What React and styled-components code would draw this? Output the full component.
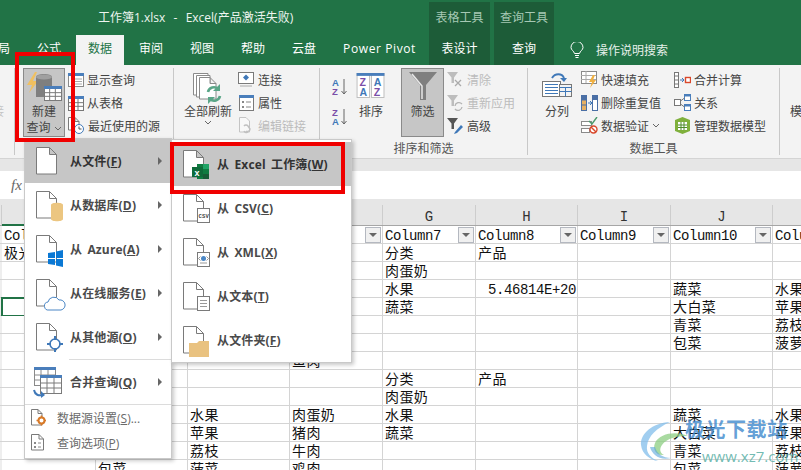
import React from 'react';
import styled, { createGlobalStyle } from 'styled-components';

const GlobalStyle = createGlobalStyle`
  html, body { margin: 0; padding: 0; background: #fff; }
`;

const UI_FONT = `"Open Sans", "Noto Sans CJK SC", sans-serif`;
const SHEET_FONT = `"Liberation Mono", "Noto Sans CJK SC", monospace`;

const Page = styled.div`
  position: relative;
  width: 801px;
  height: 470px;
  overflow: hidden;
  font-family: ${UI_FONT};
  font-size: 12px;
  color: #444;
`;

/* title bar + tabs */
const Header = styled.header`
  display: flex;
  height: 65px;
  background: #217346;
  color: #fff;
`;

const HeaderMain = styled.div`
  width: 429px;
  overflow: hidden;
`;

const Title = styled.div`
  height: 35px;
  line-height: 36px;
  padding-left: 98px;
  white-space: pre;
  word-spacing: 1px;
  color: #eef5f0;
`;

const TabRow = styled.nav`
  display: flex;
  height: 30px;
  margin-left: -15.5px;
`;

const Tab = styled.div`
  margin: 0 1.5px;
  padding: 0 12px;
  line-height: 28px;
  white-space: nowrap;
  letter-spacing: ${p => (p.$latin ? '0.6px' : '0')};
  background: ${p => (p.$active ? '#f3f3f3' : 'transparent')};
  color: ${p => (p.$active ? '#217346' : '#fff')};
`;

const ContextGroup = styled.div`
  width: ${p => p.$w}px;
  margin: 2px 4px 0 0;
  background: #1d5c38;
  text-align: center;
`;

const ContextLabel = styled.div`
  height: 33px;
  line-height: 31px;
  color: #a6c8b4;
`;

const ContextTab = styled.div`
  height: 30px;
  line-height: 28px;
  color: #fff;
`;

const SearchHint = styled.div`
  display: flex;
  align-items: center;
  gap: 12px;
  height: 30px;
  margin: 35px 0 0 12px;
  color: #e6f0ea;
`;

/* ribbon */
const Ribbon = styled.section`
  display: flex;
  height: 94px;
  box-sizing: border-box;
  padding-top: 3px;
  background: #f3f3f3;
  border-bottom: 1px solid #d4d4d4;
`;

const Group = styled.div`
  width: ${p => p.$w}px;
  height: 87px;
  box-sizing: border-box;
  flex: none;
  border-right: 1px solid #c8c8c8;
  color: #444;
`;

const StubGroup = styled(Group)`
  overflow: hidden;
  padding-top: 36px;
  line-height: 16px;
  color: #c4c4c4;
  text-indent: -8px;
`;

const EndGroup = styled.div`
  padding: 36px 0 0 10px;
  line-height: 16px;
`;

const GroupBody = styled.div`
  display: flex;
  height: 69px;
  padding-left: ${p => p.$pad}px;
`;

const GroupLabel = styled.div`
  margin-top: 3px;
  line-height: 18px;
  text-align: center;
  color: #555;
`;

const LargeButton = styled.div`
  flex: none;
  width: ${p => p.$w}px;
  height: 69px;
  box-sizing: border-box;
  margin-left: ${p => p.$gap || 0}px;
  display: flex;
  flex-direction: column;
  align-items: center;
  background: ${p => (p.$pressed ? '#c6c6c6' : 'transparent')};
  border: 1px solid ${p => (p.$pressed ? '#8a8a8a' : 'transparent')};
`;

const LargeIcon = styled.div`
  height: 35px;
  box-sizing: border-box;
  padding-bottom: ${p => p.$lift || 0}px;
  display: flex;
  align-items: flex-end;
  justify-content: center;
`;

const LargeLine = styled.div`
  display: flex;
  align-items: center;
  gap: 3px;
  line-height: 16px;
  white-space: nowrap;
`;

const SmallColumn = styled.div`
  flex: none;
  width: ${p => p.$w || 'auto'};
  margin-left: ${p => p.$gap || 0}px;
`;

const SmallButton = styled.div`
  display: flex;
  align-items: center;
  gap: 3px;
  height: 23px;
  white-space: nowrap;
  color: ${p => (p.$off ? '#bcbcbc' : '#444')};
`;

const SortColumn = styled.div`
  display: flex;
  flex: none;
  flex-direction: column;
  gap: 12px;
  width: 16px;
  padding-top: 10px;
`;

/* formula bar */
const GapBar = styled.div`
  height: ${p => p.$h}px;
  background: #e6e6e6;
`;

const FormulaBar = styled.div`
  height: 28px;
  padding-left: 11px;
  background: #fff;
  font: italic 15px/29px "Liberation Serif", serif;
  color: #666;
`;

/* worksheet */
const COLUMNS = '2px 94px 92px 102px 93px 93px 102px 93px 102px 120px';

const ColumnBar = styled.div`
  display: grid;
  grid-template-columns: ${COLUMNS};
  height: 21px;
  box-sizing: border-box;
  background: #e6e6e6;
  border-bottom: 1px solid #a6a6a6;
`;

const ColumnLetter = styled.div`
  padding-top: 2px;
  text-align: center;
  font: 14px/20px ${SHEET_FONT};
  color: #333;
  border-right: 1px solid #cdcdcd;
  box-sizing: border-box;
  height: ${p => (p.$current ? '21px' : '20px')};
  border-bottom: ${p => (p.$current ? '2px solid #217346' : '0')};
`;

const SheetRow = styled.div`
  display: grid;
  grid-template-columns: ${COLUMNS};
  height: 18px;
`;

const Cell = styled.div`
  display: flex;
  align-items: flex-start;
  justify-content: ${p => (p.$right ? 'flex-end' : 'space-between')};
  box-sizing: border-box;
  min-width: 0;
  overflow: hidden;
  padding: 0 1px 0 2px;
  border-right: 1px solid #d4d4d4;
  border-bottom: 1px solid #d4d4d4;
  font: 14px/20px ${SHEET_FONT};
  letter-spacing: 0.4px;
  color: #111;
  white-space: nowrap;
  background: ${p => (p.$stub ? '#eee' : '#fff')};
  outline: ${p => (p.$selected ? '2px solid #217346' : 'none')};
  outline-offset: -1px;
`;

const LatinText = styled.span`
  letter-spacing: -0.4px;
`;

const FilterButton = styled.span`
  flex: none;
  display: flex;
  align-items: center;
  justify-content: center;
  width: 16px;
  height: 16px;
  margin-top: 1px;
  box-sizing: border-box;
  background: #f0f0f0;
  border: 1px solid #b4b8c0;

  &::after {
    content: '';
    border-left: 4px solid transparent;
    border-right: 4px solid transparent;
    border-top: 4px solid #666;
  }
`;

/* drop-down menus */
const Menu = styled.div`
  position: absolute;
  box-sizing: border-box;
  left: ${p => p.$left}px;
  top: ${p => p.$top}px;
  width: ${p => p.$w}px;
  height: ${p => p.$h}px;
  padding-top: ${p => p.$padTop || 0}px;
  background: #fff;
  border: 1px solid #c9c9c9;
  box-shadow: 2px 2px 4px rgba(0, 0, 0, 0.22);
`;

const MenuItem = styled.div`
  position: relative;
  display: flex;
  align-items: center;
  height: 44px;
  padding-left: 11px;
  font-weight: 700;
  letter-spacing: 0.15px;
  word-spacing: 2px;
  color: ${p => (p.$active ? '#333' : '#4a4a4a')};
  background: ${p => (p.$active ? '#c6c6c6' : 'transparent')};
`;

const MenuIcon = styled.span`
  flex: none;
  display: flex;
  width: 34px;
`;

const SubArrow = styled.span`
  position: absolute;
  right: 9px;
  top: 50%;
  margin-top: -4px;
  border-top: 4px solid transparent;
  border-bottom: 4px solid transparent;
  border-left: 4px solid #666;
`;

const MenuRule = styled.div`
  height: 1px;
  margin-left: ${p => p.$indent}px;
  background: #dcdcdc;
`;

const PlainItem = styled.div`
  display: flex;
  align-items: center;
  height: 25px;
  padding-left: 6px;
  color: #6a6a6a;
`;

const PlainIcon = styled.span`
  flex: none;
  display: flex;
  width: 26px;
`;

const RedFrame = styled.div`
  position: absolute;
  left: ${p => p.$left}px;
  top: ${p => p.$top}px;
  width: ${p => p.$w}px;
  height: ${p => p.$h}px;
  box-sizing: border-box;
  border: 4px solid #f00000;
`;

const Watermark = styled.div`
  position: absolute;
  left: 640px;
  top: 418px;
  width: 161px;
  height: 48px;
`;

const WatermarkLogo = styled.svg`
  position: absolute;
  left: 0;
  top: 3px;
`;

const WatermarkName = styled.div`
  position: absolute;
  left: 45px;
  top: -1px;
  font: 700 20px/24px "Noto Sans CJK SC", sans-serif;
  letter-spacing: 0.5px;
  color: rgba(60, 135, 205, 0.8);
  white-space: nowrap;
`;

const WatermarkUrl = styled.div`
  position: absolute;
  left: 62px;
  top: 29px;
  font: 15px/18px "Open Sans", sans-serif;
  color: rgba(90, 175, 165, 0.85);
`;

/* icons */
const Chevron = () => (
  <svg width="8" height="5" viewBox="0 0 8 5">
    <path d="M1 1l3 3 3-3" fill="none" stroke="#666" />
  </svg>
);

const GridTable = ({ x, y, w, h, head = '#4a7ebb', line = '#8a8a8a' }) => {
  const cw = w / 3;
  const rh = (h - 3) / 3;
  return (
    <g>
      <rect x={x + 0.5} y={y + 0.5} width={w} height={h} fill="#fff" stroke={line} />
      <rect x={x} y={y} width={w + 1} height="3" fill={head} />
      <path
        d={`M${x + cw} ${y + 3}V${y + h} M${x + 2 * cw} ${y + 3}V${y + h} M${x} ${y + 3 + rh}H${x + w} M${x} ${y + 3 + 2 * rh}H${x + w}`}
        stroke={line}
        fill="none"
      />
    </g>
  );
};

const NewQueryIcon = () => (
  <svg width="36" height="32" viewBox="0 0 36 32">
    <path d="M9 0L1 13h5L3 21 12 9H7l4-9z" fill="#f0c060" />
    <path d="M10 5c0-4 16-4 16 0v20H10z" fill="#7f7f7f" />
    <ellipse cx="18" cy="5" rx="8" ry="2.5" fill="#a0a0a0" />
    <GridTable x={18} y={14} w={17} h={14} line="#7a7a7a" />
  </svg>
);

const ShowQueryIcon = () => (
  <svg width="16" height="16" viewBox="0 0 16 16">
    <rect x="0.5" y="1.5" width="15" height="13" fill="#fff" stroke="#8a8a8a" />
    <rect x="0" y="1" width="16" height="3" fill="#4a7ebb" />
    <path d="M5 4v11M7 7h7M7 9.5h7M7 12h7" stroke="#a8a8a8" fill="none" />
  </svg>
);

const FromTableIcon = () => (
  <svg width="16" height="16" viewBox="0 0 16 16">
    <GridTable x={0} y={1} w={15} h={14} line="#777" />
  </svg>
);

const RecentIcon = () => (
  <svg width="17" height="18" viewBox="0 0 17 18">
    <path d="M0.5 0.5H7L11 4.5V13H0.5Z M7 0.5V4.5H11" fill="#fff" stroke="#7a7a7a" />
    <circle cx="11" cy="12" r="4.5" fill="#fff" stroke="#3f78b8" />
    <path d="M11 9.5V12H13.5" fill="none" stroke="#555" />
  </svg>
);

const ConnectIcon = () => (
  <svg width="17" height="16" viewBox="0 0 17 16">
    <rect x="0.5" y="0.5" width="15" height="11" fill="#fff" stroke="#7a7a7a" />
    <path d="M8 2.5l3 3-3 3-3-3z" fill="#3f78b8" />
    <path d="M2 14h12" stroke="#aaa" />
  </svg>
);

const PropsIcon = () => (
  <svg width="17" height="16" viewBox="0 0 17 16">
    <rect x="1.5" y="0.5" width="14" height="15" fill="#fff" stroke="#7a7a7a" />
    <rect x="1" y="0" width="15" height="3" fill="#4a7ebb" />
    <path d="M4 6h2v2H4zM4 11h2v2H4z" fill="#888" />
    <path d="M8 7h5M8 12h5" stroke="#888" fill="none" />
  </svg>
);

const LinkIcon = () => (
  <svg width="17" height="17" viewBox="0 0 17 17">
    <path d="M1.5 0.5H8L11.5 4V15H1.5Z" fill="#f8f8f8" stroke="#c4c4c4" />
    <path d="M6 9a2.5 2.5 0 0 1 4 0l2 3a2.5 2.5 0 0 1-4 2M10 15a2.5 2.5 0 0 1-4-1" fill="none" stroke="#c0c0c0" strokeWidth="1.4" />
  </svg>
);

const RefreshAllIcon = () => (
  <svg width="32" height="31" viewBox="0 0 32 31">
    <path d="M1.5 0.5H16V22H1.5Z" fill="#fff" stroke="#8a8a8a" />
    <path d="M4.5 2.5H18V24H4.5Z" fill="#fff" stroke="#8a8a8a" />
    <path d="M7.5 4.5H18L24 10.5V26H7.5Z M18 4.5V10.5H24" fill="#fff" stroke="#8a8a8a" />
    <path d="M16 19a6 6 0 0 1 10-3" fill="none" stroke="#5aa688" strokeWidth="2.6" />
    <path d="M28 11v7h-7z" fill="#5aa688" />
    <path d="M28 23a6 6 0 0 1-10 3" fill="none" stroke="#5aa688" strokeWidth="2.6" />
    <path d="M16 31v-7h7z" fill="#5aa688" />
  </svg>
);

const SortIcon = ({ top, bottom, topFill, bottomFill }) => (
  <svg width="16" height="18" viewBox="0 0 16 18">
    <text x="0" y="8" fontSize="9.5" fontWeight="700" fontFamily="Liberation Sans" fill={topFill}>{top}</text>
    <text x="0" y="17" fontSize="9.5" fontWeight="700" fontFamily="Liberation Sans" fill={bottomFill}>{bottom}</text>
    <path d="M12 1v15M9.5 13l2.5 3 2.5-3" fill="none" stroke="#666" />
  </svg>
);

const SortBigIcon = () => (
  <svg width="30" height="25" viewBox="0 0 30 26" fontFamily="Liberation Sans" fontWeight="700" fontSize="11">
    <rect x="0.5" y="0.5" width="13" height="25" fill="#fff" stroke="#bdbdbd" />
    <rect x="15.5" y="0.5" width="13" height="25" fill="#fff" stroke="#bdbdbd" />
    <rect x="0" y="0" width="29" height="3" fill="#4a7ebb" />
    <text x="3" y="13" fill="#7a4ea8">Z</text>
    <text x="3" y="24" fill="#3f78b8">A</text>
    <text x="18" y="13" fill="#3f78b8">A</text>
    <text x="18" y="24" fill="#7a4ea8">Z</text>
  </svg>
);

const FunnelIcon = () => (
  <svg width="28" height="28" viewBox="0 0 28 28">
    <path d="M0 0H28L17 13V28H11V13Z" fill="#7f7f7f" />
    <path d="M3 2L13 14V27" fill="none" stroke="#e8e8e8" strokeWidth="1.5" />
  </svg>
);

const SmallFunnel = ({ fill, children }) => (
  <svg width="17" height="17" viewBox="0 0 17 17">
    <path d="M0 1H11L7 6.5V12H4.5V6.5Z" fill={fill} />
    {children}
  </svg>
);

const SplitIcon = () => (
  <svg width="32" height="26" viewBox="0 0 32 26">
    <rect x="1.5" y="9.5" width="18" height="15" fill="#fff" stroke="#777" />
    <path d="M4 12.5h13M4 15.5h13M4 18.5h13M4 21.5h13" stroke="#3f78b8" fill="none" />
    <path d="M11 6C14 1 21 1 23 6" fill="none" stroke="#3f78b8" strokeWidth="2" />
    <path d="M19 6h7l-3 4z" fill="#3f78b8" />
    <rect x="18.5" y="12.5" width="12" height="12" fill="#f3f3f3" stroke="#777" />
    <path d="M18.5 15.5h12M18.5 19.5h12M24.5 15.5v9" stroke="#3f78b8" fill="none" />
  </svg>
);

const FlashFillIcon = () => (
  <svg width="17" height="17" viewBox="0 0 17 17">
    <rect x="0.5" y="0.5" width="15" height="12" fill="#fff" stroke="#8a8a8a" />
    <path d="M0 4.5h15M0 8.5h15M5 0v12" stroke="#aaa" fill="none" />
    <path d="M12 4L8 11h3l-2 6 6-8h-3l2-5z" fill="#f0b040" />
  </svg>
);

const DedupeIcon = () => (
  <svg width="17" height="16" viewBox="0 0 17 16">
    <rect x="0.5" y="0.5" width="5" height="15" fill="#e8b060" stroke="#4a6fa5" />
    <path d="M1 5h4M1 10h4" stroke="#4a6fa5" />
    <rect x="0" y="0" width="6" height="5" fill="#4a6fa5" />
    <rect x="11.5" y="0.5" width="5" height="15" fill="#fff" stroke="#4a6fa5" />
    <rect x="11" y="0" width="6" height="5" fill="#4a6fa5" />
    <path d="M7 8h3M9 6l2 2-2 2" fill="none" stroke="#3f78b8" />
  </svg>
);

const ValidateIcon = () => (
  <svg width="17" height="17" viewBox="0 0 17 17">
    <rect x="0.5" y="4.5" width="10" height="4" fill="#fff" stroke="#8a8a8a" />
    <rect x="0.5" y="11.5" width="8" height="4" fill="#fff" stroke="#8a8a8a" />
    <path d="M8 4l3 3 5-7" fill="none" stroke="#4a9a6a" strokeWidth="1.4" />
    <circle cx="12.5" cy="12.5" r="3.5" fill="#fff" stroke="#d9482b" strokeWidth="1.4" />
    <path d="M10 10l5 5" stroke="#d9482b" strokeWidth="1.4" />
  </svg>
);

const ConsolidateIcon = () => (
  <svg width="17" height="16" viewBox="0 0 17 16">
    <rect x="0.5" y="0.5" width="4" height="15" fill="#fff" stroke="#777" />
    <path d="M0 4h4M0 8h4M0 12h4" stroke="#777" />
    <path d="M6 8h4M8 6l2 2-2 2" fill="none" stroke="#3f78b8" />
    <rect x="11.5" y="5.5" width="5" height="5" fill="#fff" stroke="#d9482b" strokeWidth="1.4" />
  </svg>
);

const RelationIcon = () => (
  <svg width="17" height="17" viewBox="0 0 17 17">
    <rect x="0.5" y="5.5" width="6" height="6" fill="#fff" stroke="#777" />
    <rect x="10.5" y="0.5" width="6" height="6" fill="#fff" stroke="#4a7ebb" />
    <rect x="10.5" y="10.5" width="6" height="6" fill="#fff" stroke="#4a7ebb" />
    <rect x="10" y="0" width="7" height="2.5" fill="#4a7ebb" />
    <rect x="10" y="10" width="7" height="2.5" fill="#4a7ebb" />
    <path d="M6.5 7L10.5 4M6.5 10L10.5 13" stroke="#777" fill="none" />
  </svg>
);

const ModelIcon = () => (
  <svg width="17" height="17" viewBox="0 0 17 17">
    <path d="M8.5 0L16 3V14L8.5 17 1 14V3Z" fill="#7fb03c" />
    <path d="M4 5h9v8H4z" fill="#fff" />
    <path d="M4 8h9M4 10.5h9M7 5v8M10 5v8" stroke="#4d8a2a" fill="none" />
  </svg>
);

const BulbIcon = () => (
  <svg width="14" height="17" viewBox="0 0 14 17">
    <path d="M4.5 11.5C4 9 1 8 1 5.5a6 6 0 0 1 12 0C13 8 10 9 9.5 11.5Z" fill="none" stroke="#fff" />
    <path d="M5 13.5h4M5.5 15.5h3" stroke="#fff" />
  </svg>
);

const Doc = () => (
  <path d="M0.5 5.5H13.5L20.5 12.5V32H0.5Z M13.5 5.5V12.5H20.5" fill="#fff" stroke="#7a7a7a" />
);

const MenuGlyph = ({ children }) => (
  <svg width="30" height="38" viewBox="0 0 30 38" overflow="visible">
    <Doc />
    {children}
  </svg>
);

const ExcelBadge = () => (
  <g>
    <rect x="14" y="19" width="12" height="15" fill="#107c41" />
    <rect x="20" y="19" width="6" height="5" fill="#21a366" />
    <rect x="20" y="29" width="6" height="5" fill="#185c37" />
    <rect x="9" y="22" width="11" height="10" fill="#0f6b3a" />
    <text x="11.5" y="30.5" fontSize="9" fontWeight="700" fontFamily="Liberation Sans" fill="#fff">x</text>
  </g>
);

const MergeIcon = () => (
  <svg width="30" height="32" viewBox="0 0 30 32" overflow="visible">
    <g transform="translate(-3 0)">
      <GridTable x={1} y={1} w={21} h={18} line="#8a8a8a" />
      <GridTable x={7} y={9} w={21} h={18} line="#7a7a7a" />
      <path d="M1 24c1 5 5 6 8 5" fill="none" stroke="#3f78b8" strokeWidth="2" />
      <path d="M8 25l4 4-4 3z" fill="#3f78b8" />
    </g>
  </svg>
);

const SourceSettingsIcon = () => (
  <svg width="15" height="17" viewBox="0 0 15 17">
    <path d="M0.5 0.5H7L11 4.5V16H0.5Z M7 0.5V4.5H11" fill="#fff" stroke="#7a7a7a" />
    <circle cx="10.5" cy="11.5" r="3" fill="#fff" stroke="#d87a28" strokeWidth="2" />
    <path d="M10.5 6.5v2M10.5 14.5v2M5.5 11.5h2M13.5 11.5h2" stroke="#d87a28" strokeWidth="1.6" />
  </svg>
);

const QueryOptionsIcon = () => (
  <svg width="13" height="17" viewBox="0 0 13 17">
    <path d="M0.5 0.5H8L12.5 5V16H0.5Z M8 0.5V5H12.5" fill="#fff" stroke="#7a7a7a" />
    <path d="M3 8h2v2H3zM3 12h2v2H3z" fill="#8a8a8a" />
    <path d="M7 9h3M7 13h3" stroke="#8a8a8a" />
  </svg>
);

const SwirlLogo = () => (
  <WatermarkLogo width="50" height="42" viewBox="0 0 50 42">
    <path d="M30 1C12 2 0 13 1 24c1 9 9 15 17 16-7-3-12-8-11-15C8 15 17 7 30 1z" fill="rgba(130,190,235,0.75)" />
    <path d="M48 15C36 10 20 12 15 22c-3 7 2 13 9 12-4-2-5-6-2-10 5-7 15-9 26-9z" fill="rgba(140,205,130,0.75)" />
    <path d="M10 26c2 8 10 14 21 11-8 0-14-4-16-11z" fill="rgba(90,165,220,0.6)" />
  </WatermarkLogo>
);

/* sheet data, keyed by column index */
const ROWS = [
  {},
  { 1: '极光', 5: '分类', 6: '产品' },
  { 5: '肉蛋奶' },
  { 5: '水果', 6: { right: '5.46814E+20' }, 8: '蔬菜', 9: '水果' },
  { 5: '蔬菜', 8: '大白菜', 9: '苹果' },
  { 8: '青菜', 9: '荔枝' },
  { 8: '包菜', 9: '菠萝' },
  { 4: '鱼肉' },
  { 5: '分类', 6: '产品' },
  { 5: '肉蛋奶' },
  { 3: '水果', 4: '肉蛋奶', 5: '水果', 8: '蔬菜', 9: '水果' },
  { 3: '苹果', 4: '猪肉', 5: '蔬菜', 8: '大白菜', 9: '苹果' },
  { 3: '荔枝', 4: '牛肉', 8: '青菜', 9: '荔枝' },
  { 2: '包菜', 3: '菠菜', 4: '鸡肉', 8: '包菜', 9: '菠萝' }
];

const LETTERS = ['', 'C', 'D', 'E', 'F', 'G', 'H', 'I', 'J', 'K'];
const INDEXES = LETTERS.map((_, i) => i);

const renderCell = (row, rowIndex, i) => {
  if (i === 0) return <Cell key={i} $stub />;
  if (rowIndex === 0) {
    return (
      <Cell key={i}>
        <LatinText>Column{i + 2}</LatinText>
        {i < 9 && <FilterButton />}
      </Cell>
    );
  }
  const value = row[i];
  if (value && value.right) {
    return (
      <Cell key={i} $right>
        <LatinText>{value.right}</LatinText>
      </Cell>
    );
  }
  return (
    <Cell key={i} $selected={rowIndex === 4 && i === 1}>
      {value}
    </Cell>
  );
};

const App = () => (
  <Page>
    <GlobalStyle />
    <Header>
      <HeaderMain>
        <Title>工作簿1.xlsx  -  Excel(产品激活失败)</Title>
        <TabRow>
          <Tab>局</Tab>
          <Tab>公式</Tab>
          <Tab $active>数据</Tab>
          <Tab>审阅</Tab>
          <Tab>视图</Tab>
          <Tab>帮助</Tab>
          <Tab>云盘</Tab>
          <Tab $latin>Power Pivot</Tab>
        </TabRow>
      </HeaderMain>
      <ContextGroup $w={61}>
        <ContextLabel>表格工具</ContextLabel>
        <ContextTab>表设计</ContextTab>
      </ContextGroup>
      <ContextGroup $w={60}>
        <ContextLabel>查询工具</ContextLabel>
        <ContextTab>查询</ContextTab>
      </ContextGroup>
      <SearchHint>
        <BulbIcon />
        操作说明搜索
      </SearchHint>
    </Header>

    <Ribbon>
      <StubGroup $w={15}>接</StubGroup>

      <Group $w={159}>
        <GroupBody $pad={8}>
          <LargeButton $w={42} $pressed>
            <LargeIcon><NewQueryIcon /></LargeIcon>
            <LargeLine>新建</LargeLine>
            <LargeLine>查询<Chevron /></LargeLine>
          </LargeButton>
          <SmallColumn $gap={3}>
            <SmallButton><ShowQueryIcon />显示查询</SmallButton>
            <SmallButton><FromTableIcon />从表格</SmallButton>
            <SmallButton><RecentIcon />最近使用的源</SmallButton>
          </SmallColumn>
        </GroupBody>
      </Group>

      <Group $w={146}>
        <GroupBody $pad={10}>
          <LargeButton $w={48}>
            <LargeIcon><RefreshAllIcon /></LargeIcon>
            <LargeLine>全部刷新</LargeLine>
            <LargeLine><Chevron /></LargeLine>
          </LargeButton>
          <SmallColumn $gap={6}>
            <SmallButton><ConnectIcon />连接</SmallButton>
            <SmallButton><PropsIcon />属性</SmallButton>
            <SmallButton $off><LinkIcon />编辑链接</SmallButton>
          </SmallColumn>
        </GroupBody>
      </Group>

      <Group $w={208}>
        <GroupBody $pad={12}>
          <SortColumn>
            <SortIcon top="A" bottom="Z" topFill="#3f78b8" bottomFill="#7a4ea8" />
            <SortIcon top="Z" bottom="A" topFill="#7a4ea8" bottomFill="#3f78b8" />
          </SortColumn>
          <LargeButton $w={36} $gap={5}>
            <LargeIcon $lift={6}><SortBigIcon /></LargeIcon>
            <LargeLine>排序</LargeLine>
          </LargeButton>
          <LargeButton $w={43} $gap={12} $pressed>
            <LargeIcon $lift={4}><FunnelIcon /></LargeIcon>
            <LargeLine>筛选</LargeLine>
          </LargeButton>
          <SmallColumn $gap={3}>
            <SmallButton $off>
              <SmallFunnel fill="#bdbdbd">
                <path d="M8 9l6 6M14 9l-6 6" stroke="#aaa" strokeWidth="1.3" />
              </SmallFunnel>
              清除
            </SmallButton>
            <SmallButton $off>
              <SmallFunnel fill="#bdbdbd">
                <path d="M8 12a4 4 0 0 1 7-2M15 13a4 4 0 0 1-7 2" fill="none" stroke="#b4b4b4" strokeWidth="1.3" />
              </SmallFunnel>
              重新应用
            </SmallButton>
            <SmallButton>
              <SmallFunnel fill="#555">
                <path d="M8 15l6-7 2 2-6 6-3 1z" fill="#3f78b8" />
              </SmallFunnel>
              高级
            </SmallButton>
          </SmallColumn>
        </GroupBody>
        <GroupLabel>排序和筛选</GroupLabel>
      </Group>

      <Group $w={252}>
        <GroupBody $pad={13}>
          <LargeButton $w={32}>
            <LargeIcon $lift={6}><SplitIcon /></LargeIcon>
            <LargeLine>分列</LargeLine>
          </LargeButton>
          <SmallColumn $gap={8} $w="93px">
            <SmallButton><FlashFillIcon />快速填充</SmallButton>
            <SmallButton><DedupeIcon />删除重复值</SmallButton>
            <SmallButton><ValidateIcon />数据验证<Chevron /></SmallButton>
          </SmallColumn>
          <SmallColumn>
            <SmallButton><ConsolidateIcon />合并计算</SmallButton>
            <SmallButton><RelationIcon />关系</SmallButton>
            <SmallButton><ModelIcon />管理数据模型</SmallButton>
          </SmallColumn>
        </GroupBody>
        <GroupLabel>数据工具</GroupLabel>
      </Group>

      <EndGroup>模</EndGroup>
    </Ribbon>

    <GapBar $h={12} />
    <FormulaBar>fx</FormulaBar>
    <GapBar $h={6} />

    <ColumnBar>
      {LETTERS.map((letter, i) => (
        <ColumnLetter key={i} $current={i === 1}>{letter}</ColumnLetter>
      ))}
    </ColumnBar>
    {ROWS.map((row, rowIndex) => (
      <SheetRow key={rowIndex}>
        {INDEXES.map(i => renderCell(row, rowIndex, i))}
      </SheetRow>
    ))}

    <Menu $left={24} $top={138} $w={148} $h={321}>
      <MenuItem $active>
        <MenuIcon><MenuGlyph /></MenuIcon>
        <span>从文件(<u>F</u>)</span>
        <SubArrow />
      </MenuItem>
      <MenuItem>
        <MenuIcon>
          <MenuGlyph>
            <path d="M15 19c0-3 12-3 12 0v14c0 3-12 3-12 0z" fill="#ecc681" />
          </MenuGlyph>
        </MenuIcon>
        <span>从数据库(<u>D</u>)</span>
        <SubArrow />
      </MenuItem>
      <MenuItem>
        <MenuIcon>
          <MenuGlyph>
            <path d="M12 23l7-1v6h-7zM20 21.5l7-1.5v8h-7zM12 29h7v6l-7-1zM20 29h7v8l-7-1.5z" fill="#0a78d4" />
          </MenuGlyph>
        </MenuIcon>
        <span>从 Azure(<u>A</u>)</span>
        <SubArrow />
      </MenuItem>
      <MenuItem>
        <MenuIcon>
          <MenuGlyph>
            <path d="M13 36a4 4 0 0 1-1-8 6 6 0 0 1 11-2 5 5 0 0 1 2 10z" fill="#fff" stroke="#4a86c5" />
          </MenuGlyph>
        </MenuIcon>
        <span>从在线服务(<u>E</u>)</span>
        <SubArrow />
      </MenuItem>
      <MenuItem>
        <MenuIcon>
          <MenuGlyph>
            <circle cx="19" cy="26" r="5" fill="#fff" stroke="#3f78b8" strokeWidth="1.6" />
            <path d="M19 18v4M19 30v4M11 26h4M23 26h4" stroke="#3f78b8" strokeWidth="2" />
          </MenuGlyph>
        </MenuIcon>
        <span>从其他源(<u>O</u>)</span>
        <SubArrow />
      </MenuItem>
      <MenuRule $indent={44} />
      <MenuItem>
        <MenuIcon><MergeIcon /></MenuIcon>
        <span>合并查询(<u>Q</u>)</span>
        <SubArrow />
      </MenuItem>
      <MenuRule $indent={0} />
      <PlainItem>
        <PlainIcon><SourceSettingsIcon /></PlainIcon>
        <span>数据源设置(<u>S</u>)...</span>
      </PlainItem>
      <PlainItem>
        <PlainIcon><QueryOptionsIcon /></PlainIcon>
        <span>查询选项(<u>P</u>)</span>
      </PlainItem>
    </Menu>

    <Menu $left={171} $top={139} $w={181} $h={224} $padTop={2}>
      <MenuItem $active>
        <MenuIcon>
          <MenuGlyph><ExcelBadge /></MenuGlyph>
        </MenuIcon>
        <span>从 Excel 工作簿(<u>W</u>)</span>
      </MenuItem>
      <MenuItem>
        <MenuIcon>
          <MenuGlyph>
            <rect x="14.5" y="19.5" width="12" height="14" fill="#fff" stroke="#7a7a7a" />
            <text x="15.5" y="29" fontSize="5.5" fontFamily="Liberation Mono" fill="#444">CSV</text>
          </MenuGlyph>
        </MenuIcon>
        <span>从 CSV(<u>C</u>)</span>
      </MenuItem>
      <MenuItem>
        <MenuIcon>
          <MenuGlyph>
            <rect x="14.5" y="19.5" width="12" height="14" fill="#fff" stroke="#7a7a7a" />
            <circle cx="20.5" cy="25.5" r="2.5" fill="#4a86c5" />
            <path d="M15.5 25.5l2-2M15.5 25.5l2 2M25.5 25.5l-2-2M25.5 25.5l-2 2M17 30h7" stroke="#999" fill="none" />
          </MenuGlyph>
        </MenuIcon>
        <span>从 XML(<u>X</u>)</span>
      </MenuItem>
      <MenuItem>
        <MenuIcon>
          <MenuGlyph>
            <rect x="14.5" y="19.5" width="12" height="14" fill="#fff" stroke="#7a7a7a" />
            <path d="M17 23.5h7M17 26.5h7M17 29.5h7" stroke="#999" fill="none" />
          </MenuGlyph>
        </MenuIcon>
        <span>从文本(<u>T</u>)</span>
      </MenuItem>
      <MenuItem>
        <MenuIcon>
          <MenuGlyph>
            <path d="M6 22H14L16 20H26V36H6Z" fill="#e9c280" />
          </MenuGlyph>
        </MenuIcon>
        <span>从文件夹(<u>F</u>)</span>
      </MenuItem>
    </Menu>

    <RedFrame $left={15} $top={52} $w={60} $h={90} />
    <RedFrame $left={170} $top={142} $w={175} $h={52} />

    <Watermark>
      <SwirlLogo />
      <WatermarkName>极光下载站</WatermarkName>
      <WatermarkUrl>www.xz7.com</WatermarkUrl>
    </Watermark>
  </Page>
);

export default App;
